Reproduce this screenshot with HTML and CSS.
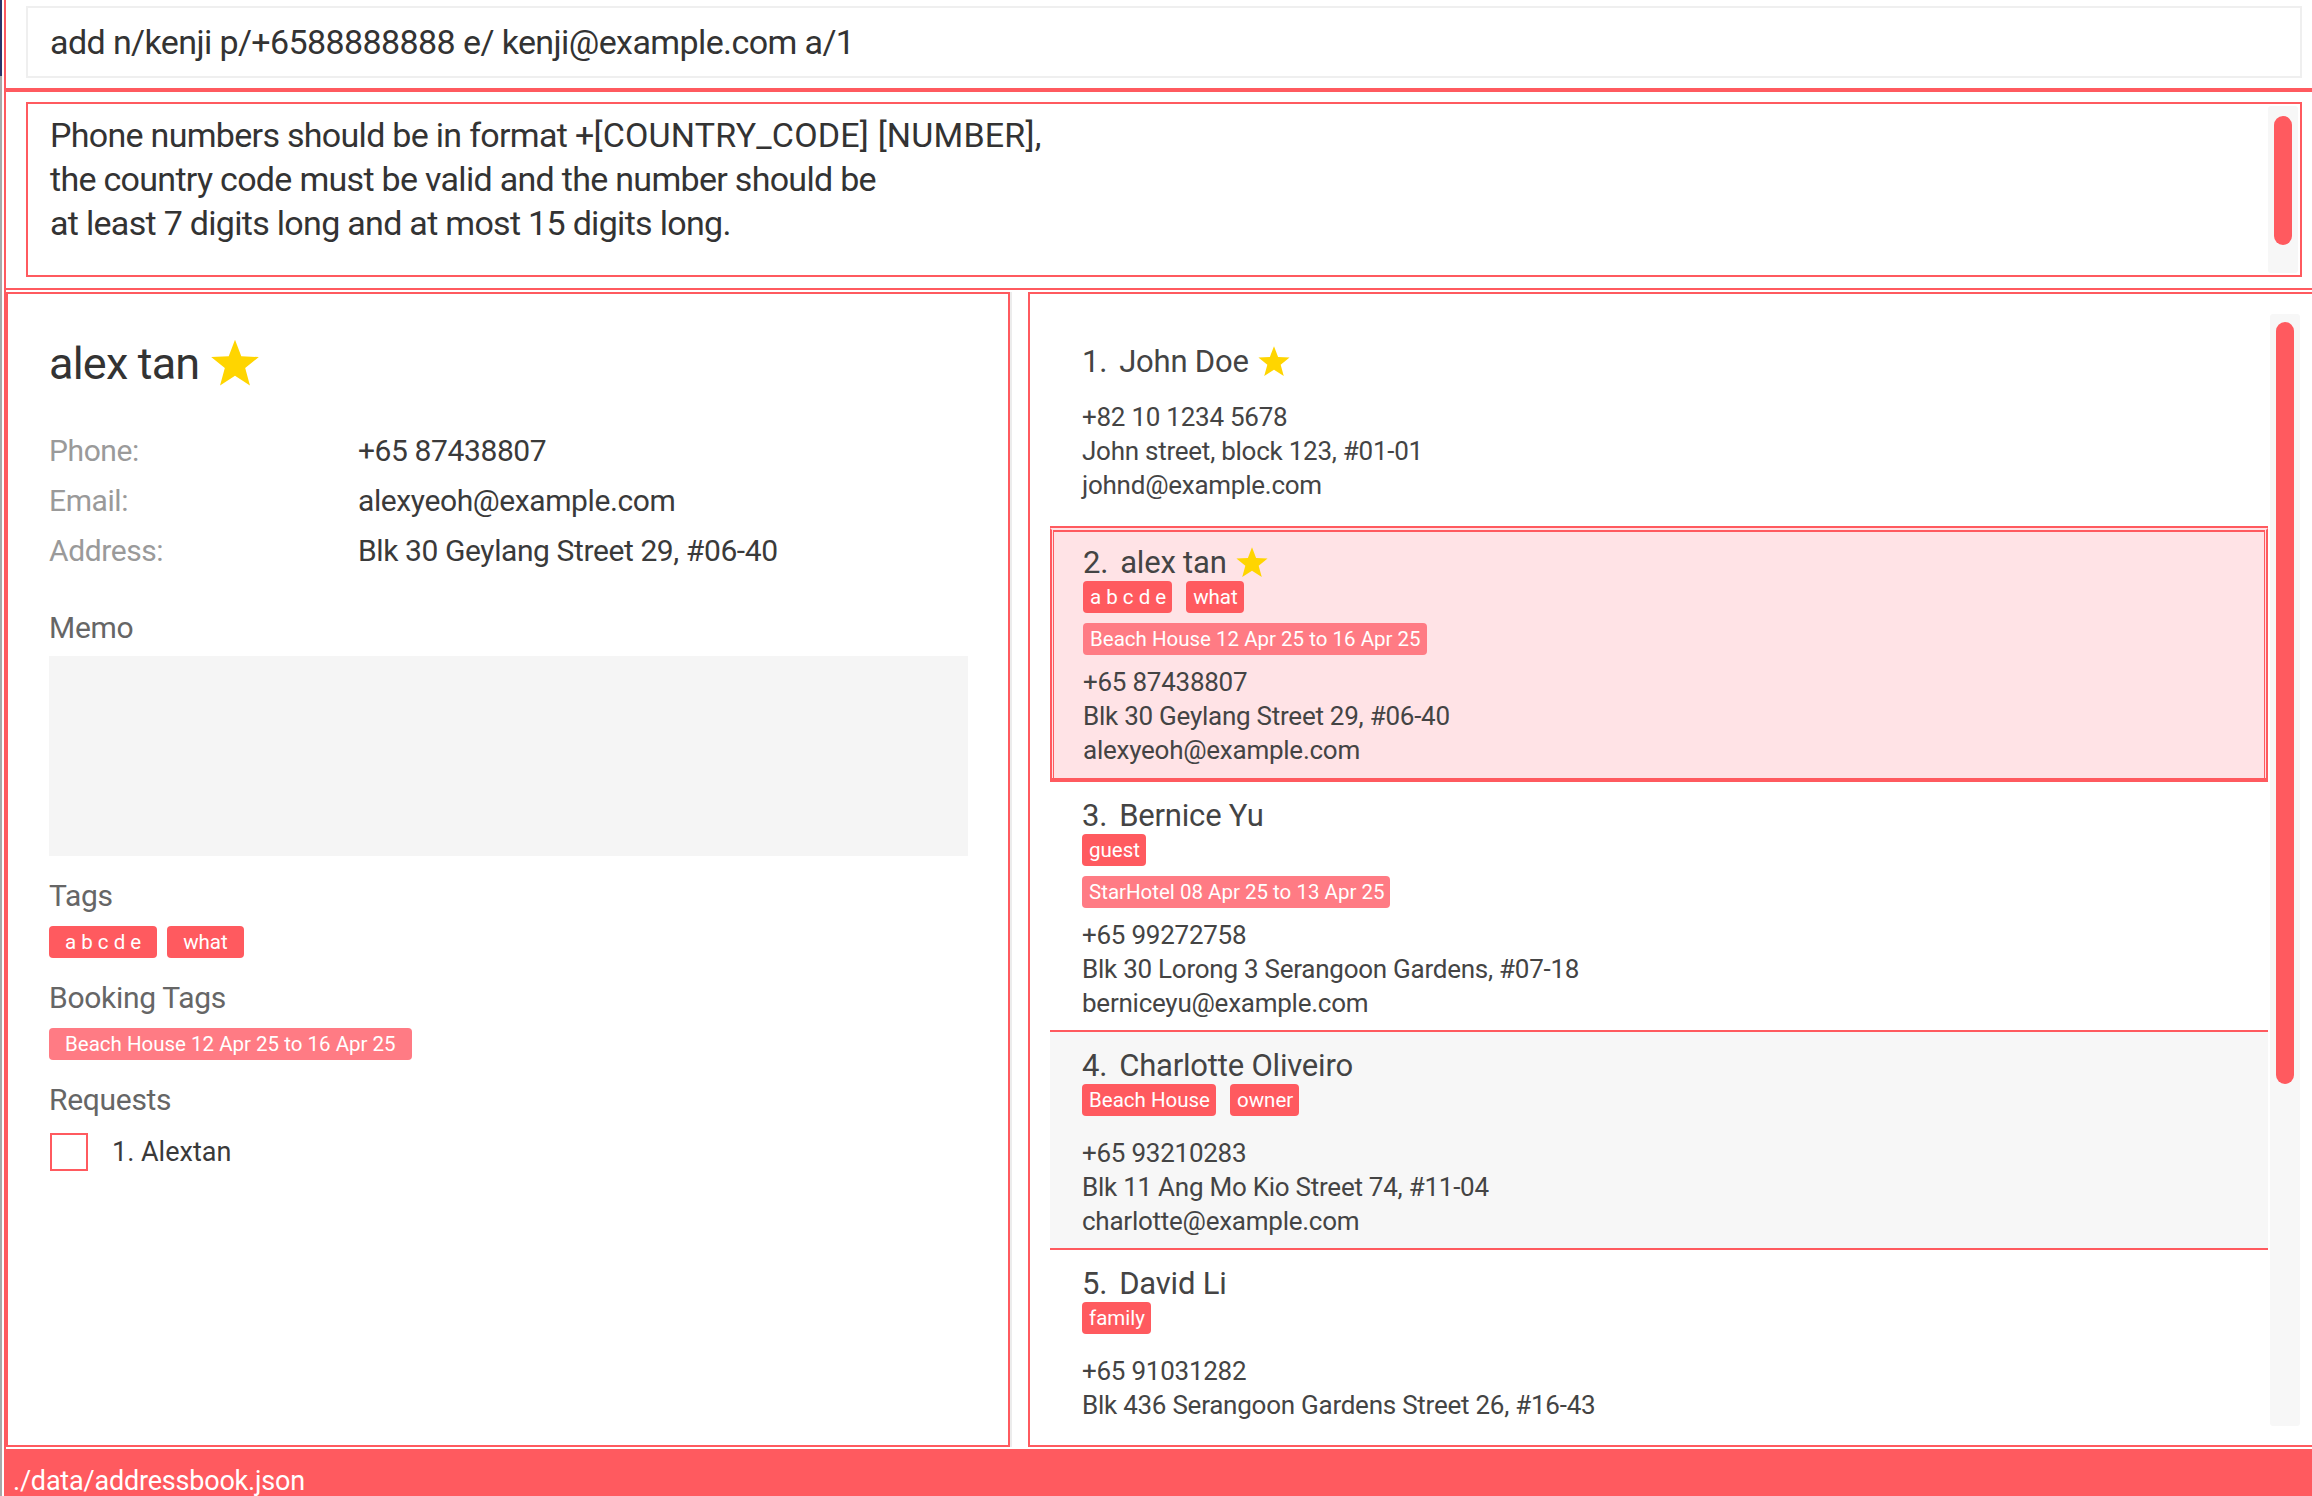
FILE: index.html
```html
<!DOCTYPE html>
<html>
<head>
<meta charset="utf-8">
<link rel="stylesheet" href="styles.css">
</head>
<body>
<div class="app">
  <div class="edge"></div>
  <div class="main">
    <div class="command-row">
      <div class="command-box">add n/kenji p/+6588888888 e/ kenji@example.com a/1</div>
    </div>
    <div class="result-row">
      <div class="result-box">
        <div class="result-text">Phone numbers should be in format +<span class="caps">[COUNTRY_CODE] [NUMBER]</span>,<br>the country code must be valid and the number should be<br>at least 7 digits long and at most 15 digits long.</div>
        <div class="vscroll result-scroll"><div class="thumb result-thumb"></div></div>
      </div>
    </div>
    <div class="panels">
      <section class="detail-panel">
        <div class="detail-name">
          <span>alex tan</span>
          <svg class="star star-big" viewBox="0 0 24 24"><polygon points="12,0.8 14.9,8.4 23,8.8 16.7,13.9 18.9,21.9 12,17.4 5.1,21.9 7.3,13.9 1,8.8 9.1,8.4"/></svg>
        </div>
        <div class="detail-rows">
          <div class="detail-row"><span class="label">Phone:</span><span class="value">+65 87438807</span></div>
          <div class="detail-row"><span class="label">Email:</span><span class="value">alexyeoh@example.com</span></div>
          <div class="detail-row"><span class="label">Address:</span><span class="value">Blk 30 Geylang Street 29, #06-40</span></div>
        </div>
        <div class="heading heading-memo">Memo</div>
        <div class="memo"></div>
        <div class="heading">Tags</div>
        <div class="chips panel-chips">
          <span class="chip">a b c d e</span>
          <span class="chip">what</span>
        </div>
        <div class="heading">Booking Tags</div>
        <div class="chips panel-chips">
          <span class="chip chip-booking">Beach House 12 Apr 25 to 16 Apr 25</span>
        </div>
        <div class="heading">Requests</div>
        <div class="request">
          <span class="checkbox"></span>
          <span class="request-text">1. Alextan</span>
        </div>
      </section>
      <div class="divider"></div>
      <section class="list-panel">
        <div class="cards">
          <div class="card">
            <div class="card-name"><span class="idx">1.</span><span>John Doe</span><svg class="star star-small" viewBox="0 0 24 24"><polygon points="12,0.8 14.9,8.4 23,8.8 16.7,13.9 18.9,21.9 12,17.4 5.1,21.9 7.3,13.9 1,8.8 9.1,8.4"/></svg></div>
            <div class="chips card-chips tags-row"></div>
            <div class="chips card-chips booking-row"></div>
            <div class="card-info">
              <div>+82 10 1234 5678</div>
              <div>John street, block 123, #01-01</div>
              <div>johnd@example.com</div>
            </div>
          </div>
          <div class="card selected">
            <div class="card-name"><span class="idx">2.</span><span>alex tan</span><svg class="star star-small" viewBox="0 0 24 24"><polygon points="12,0.8 14.9,8.4 23,8.8 16.7,13.9 18.9,21.9 12,17.4 5.1,21.9 7.3,13.9 1,8.8 9.1,8.4"/></svg></div>
            <div class="chips card-chips tags-row"><span class="chip">a b c d e</span><span class="chip">what</span></div>
            <div class="chips card-chips booking-row"><span class="chip chip-booking">Beach House 12 Apr 25 to 16 Apr 25</span></div>
            <div class="card-info">
              <div>+65 87438807</div>
              <div>Blk 30 Geylang Street 29, #06-40</div>
              <div>alexyeoh@example.com</div>
            </div>
          </div>
          <div class="card">
            <div class="card-name"><span class="idx">3.</span><span>Bernice Yu</span></div>
            <div class="chips card-chips tags-row"><span class="chip">guest</span></div>
            <div class="chips card-chips booking-row"><span class="chip chip-booking">StarHotel 08 Apr 25 to 13 Apr 25</span></div>
            <div class="card-info">
              <div>+65 99272758</div>
              <div>Blk 30 Lorong 3 Serangoon Gardens, #07-18</div>
              <div>berniceyu@example.com</div>
            </div>
          </div>
          <div class="card alt">
            <div class="card-name"><span class="idx">4.</span><span>Charlotte Oliveiro</span></div>
            <div class="chips card-chips tags-row"><span class="chip">Beach House</span><span class="chip">owner</span></div>
            <div class="chips card-chips booking-row"></div>
            <div class="card-info">
              <div>+65 93210283</div>
              <div>Blk 11 Ang Mo Kio Street 74, #11-04</div>
              <div>charlotte@example.com</div>
            </div>
          </div>
          <div class="card">
            <div class="card-name"><span class="idx">5.</span><span>David Li</span></div>
            <div class="chips card-chips tags-row"><span class="chip">family</span></div>
            <div class="chips card-chips booking-row"></div>
            <div class="card-info">
              <div>+65 91031282</div>
              <div>Blk 436 Serangoon Gardens Street 26, #16-43</div>
            </div>
          </div>
        </div>
        <div class="vscroll list-scroll"><div class="thumb list-thumb"></div></div>
      </section>
    </div>
    <footer class="status">./data/addressbook.json</footer>
  </div>
</div>
</body>
</html>
```

FILE: styles.css
```css
* { box-sizing: border-box; }

html, body {
  margin: 0;
  padding: 0;
}

body {
  width: 2312px;
  height: 1496px;
  overflow: hidden;
  background: #ffffff;
  font-family: Roboto, "Liberation Sans", sans-serif;
  color: #3a3a3a;
}

.app {
  display: flex;
  height: 1496px;
}

.edge {
  flex: none;
  width: 2px;
  margin-right: 2px;
  background: linear-gradient(#2d3468 0, #2d3468 76px, #a9a9a9 76px, #a9a9a9 100%);
}

.main {
  flex: 1;
  min-width: 0;
  display: flex;
  flex-direction: column;
  border-left: 2px solid #ff5a5f;
  overflow: hidden;
}

/* command */
.command-row {
  flex: none;
  padding: 6px 10px 10px 20px;
}

.command-box {
  height: 72px;
  border: 2px solid #efefef;
  padding: 12px 20px 0 22px;
  font-size: 34px;
  line-height: 44px;
  letter-spacing: -0.6px;
  color: #333333;
  white-space: nowrap;
}

/* result */
.result-row {
  flex: none;
  border-top: 4px solid #ff5a5f;
  padding: 10px 10px 11px 20px;
}

.result-box {
  height: 175px;
  border: 2px solid #ff5a5f;
  display: flex;
}

.result-text {
  flex: 1;
  padding: 9px 0 0 22px;
  font-size: 34px;
  line-height: 44px;
  letter-spacing: -0.7px;
  color: #333333;
}

.caps {
  letter-spacing: 0.2px;
}

.vscroll {
  flex: none;
  width: 30px;
  background: #f7f7f7;
  border-radius: 3px;
}

.thumb {
  background: #ff5a5f;
  border-radius: 10px;
}

.result-scroll {
  margin: 2px 2px 2px 0;
}

.result-thumb {
  margin: 10px 6px 0;
  height: 129px;
}

/* panels */
.panels {
  flex: none;
  height: 1159px;
  border-top: 2px solid #ff5a5f;
  padding-top: 2px;
  display: flex;
}

.detail-panel {
  flex: none;
  width: 1004px;
  border: 2px solid #ff5a5f;
  padding: 42px 40px 0 41px;
}

.divider {
  flex: none;
  width: 2px;
  background: #ececec;
}

.detail-name {
  display: flex;
  align-items: center;
  height: 56px;
  font-size: 45px;
  line-height: 56px;
  letter-spacing: -0.8px;
  color: #333333;
}

.star {
  fill: #ffd500;
  flex: none;
}

.star-big {
  width: 52px;
  height: 52px;
  margin-left: 10px;
}

.detail-rows {
  margin-top: 34px;
}

.detail-row {
  display: flex;
  height: 50px;
  font-size: 30px;
  line-height: 50px;
  letter-spacing: -0.4px;
}

.label {
  width: 309px;
  flex: none;
  color: #9a9a9a;
}

.value {
  color: #3a3a3a;
}

.heading {
  margin-top: 20px;
  height: 40px;
  font-size: 30px;
  line-height: 40px;
  letter-spacing: -0.3px;
  color: #666666;
}

.heading-memo {
  margin-top: 32px;
}

.memo {
  margin-top: 8px;
  height: 200px;
  background: #f5f5f5;
}

.chips {
  display: flex;
  flex-wrap: wrap;
}

.chip {
  height: 32px;
  line-height: 32px;
  font-size: 20.5px;
  color: #ffffff;
  background: #ff5a5f;
  border-radius: 4px;
  white-space: pre;
}

.chip-booking {
  background: #ff7b84;
}

.panel-chips {
  margin-top: 10px;
  gap: 10px;
}

.panel-chips .chip {
  padding: 0 16px;
}

.request {
  margin-top: 13px;
  display: flex;
  align-items: center;
  height: 38px;
}

.checkbox {
  flex: none;
  width: 38px;
  height: 38px;
  margin-left: 1px;
  border: 2px solid #ff5a5f;
  background: #ffffff;
}

.request-text {
  margin-left: 24px;
  font-size: 27px;
  color: #3a3a3a;
}

/* list */
.list-panel {
  flex: none;
  width: 1294px;
  margin-left: 16px;
  border: 2px solid #ff5a5f;
  padding: 20px 20px 19px 20px;
  display: flex;
}

.cards {
  flex: none;
  width: 1218px;
  overflow: hidden;
  padding-top: 14px;
}

.list-scroll {
  margin-left: 2px;
}

.list-thumb {
  margin: 8px 6px 0;
  height: 762px;
}

.card {
  min-height: 200px;
  padding: 14px 32px 10px;
  border-bottom: 2px solid #ff5a5f;
  background: #ffffff;
  color: #444444;
}

.card.alt {
  background: #f7f7f7;
}

.card.selected {
  padding: 13px 31px 11px 31px;
  border: 2px solid #ff5a5f;
  border-top-color: #ffe3e6;
  border-bottom-width: 4px;
  background: #ffe3e6;
  box-shadow: inset 1px 0 0 #ffe3e6, inset -1px 0 0 #ffe3e6, inset 2px 0 0 #ff5a5f, inset -2px 0 0 #ff5a5f, inset 0 2px 0 #ff5a5f;
}

.card-name {
  display: flex;
  align-items: center;
  height: 40px;
  font-size: 31px;
  line-height: 40px;
  letter-spacing: -0.2px;
  color: #444444;
}

.idx {
  margin-right: 12px;
}

.star-small {
  width: 34px;
  height: 34px;
  margin-left: 8px;
}

.card-chips {
  gap: 14px;
}

.tags-row {
  margin-top: -2px;
}

.card-chips .chip {
  padding: 0 6px 0 7px;
}

.booking-row {
  margin-top: 10px;
}

.card-info {
  margin-top: 10px;
  font-size: 26px;
  line-height: 34px;
  letter-spacing: -0.25px;
  color: #444444;
}

/* status */
.status {
  flex: none;
  margin-top: 2px;
  height: 47px;
  background: #ff5a5f;
  color: #ffffff;
  font-size: 27px;
  letter-spacing: -0.2px;
  padding: 16px 0 0 7px;
  overflow: hidden;
  white-space: nowrap;
}
```
